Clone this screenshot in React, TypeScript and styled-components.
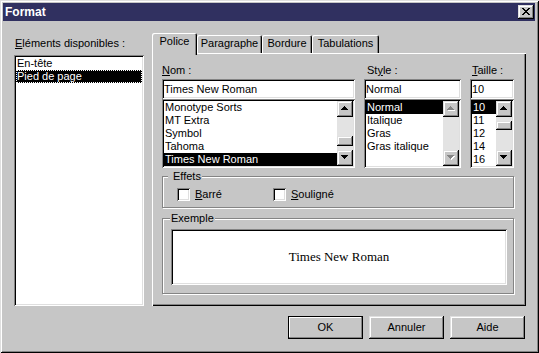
import styled, { createGlobalStyle, css } from 'styled-components';

const face = '#c6c6c6';
const shadow = '#848484';
const light = '#dfdfdf';

const GlobalStyle = createGlobalStyle`
  html, body {
    margin: 0;
    padding: 0;
    background: ${face};
  }
  body {
    font-family: 'Liberation Sans', Arial, sans-serif;
    font-size: 11px;
    color: #000;
  }
`;

const raised = css`
  background: ${face};
  box-shadow: inset -1px -1px 0 #000, inset 1px 1px 0 ${light},
    inset -2px -2px 0 ${shadow}, inset 2px 2px 0 #fff;
`;

const sunken = css`
  box-shadow: inset 1px 1px 0 ${shadow}, inset -1px -1px 0 #fff,
    inset 2px 2px 0 #000, inset -2px -2px 0 ${light};
`;

const Window = styled.div`
  width: 539px;
  height: 353px;
  box-sizing: border-box;
  padding: 3px 4px 4px 3px;
  background: ${face};
  box-shadow: inset 1px 1px 0 ${light}, inset -1px -1px 0 #000,
    inset 2px 2px 0 #fff, inset -2px -2px 0 ${shadow};
  display: flex;
  flex-direction: column;
`;

const TitleBar = styled.div`
  height: 18px;
  background: #303060;
  display: flex;
  align-items: center;
  justify-content: space-between;
  padding: 0 1px 0 2px;
`;

const Title = styled.span`
  color: #fff;
  font-weight: bold;
  font-size: 12px;
  line-height: 18px;
`;

const CloseButton = styled.div`
  width: 16px;
  height: 14px;
  box-sizing: border-box;
  ${raised};
  display: flex;
  align-items: center;
  justify-content: center;
  padding: 0 1px 1px 0;
`;

const Main = styled.div`
  display: flex;
  padding-left: 11px;
`;

const LeftColumn = styled.div`
  width: 130px;
  padding-top: 16px;
  display: flex;
  flex-direction: column;
`;

const RightColumn = styled.div`
  width: 374px;
  margin-left: 8px;
  padding-top: 12px;
  display: flex;
  flex-direction: column;
`;

const Label = styled.div<{ $indent?: number }>`
  line-height: 13px;
  height: 13px;
  padding-left: ${(p) => p.$indent ?? 0}px;
  white-space: nowrap;
`;

const TabStrip = styled.div`
  height: 20px;
  display: flex;
  align-items: flex-end;
`;

const Tab = styled.div<{ $active?: boolean; $w: number }>`
  width: ${(p) => p.$w}px;
  height: ${(p) => (p.$active ? 22 : 18)}px;
  margin-bottom: ${(p) => (p.$active ? -2 : 0)}px;
  box-sizing: border-box;
  padding-top: 2px;
  line-height: 13px;
  text-align: center;
  background: ${face};
  border-radius: 2px 2px 0 0;
  box-shadow: inset 1px 1px 0 #fff, inset -1px 0 0 #000, inset -2px 0 0 ${shadow};
  position: relative;
  z-index: ${(p) => (p.$active ? 1 : 0)};
`;

const Panel = styled.div`
  height: 253px;
  box-sizing: border-box;
  padding: 11px 12px 0 10px;
  background: ${face};
  box-shadow: inset 1px 1px 0 #fff, inset -1px -1px 0 #000, inset -2px -2px 0 ${shadow};
  display: flex;
  flex-direction: column;
`;

const FieldRow = styled.div`
  display: grid;
  grid-template-columns: 193px 97px 44px;
  column-gap: 9px;
`;

const Field = styled.div`
  display: flex;
  flex-direction: column;
`;

const TextBox = styled.div`
  margin-top: 2px;
  height: 20px;
  box-sizing: border-box;
  padding: 2px;
  line-height: 16px;
  background: #fff;
  white-space: nowrap;
  overflow: hidden;
  ${sunken};
`;

const ListBox = styled.div<{ $h: number; $mt?: number }>`
  height: ${(p) => p.$h}px;
  margin-top: ${(p) => p.$mt ?? 0}px;
  box-sizing: border-box;
  padding: 2px;
  background: #fff;
  ${sunken};
  display: flex;
`;

const Rows = styled.div`
  flex: 1;
  min-width: 0;
  overflow: hidden;
`;

const Row = styled.div<{ $sel?: boolean; $focus?: boolean }>`
  height: 13px;
  line-height: 13px;
  padding-left: 1px;
  white-space: nowrap;
  background: ${(p) => (p.$sel ? '#000' : 'transparent')};
  color: ${(p) => (p.$sel ? '#fff' : '#000')};
  outline: ${(p) => (p.$focus ? '1px dotted #fff' : 'none')};
  outline-offset: -1px;
`;

const ScrollBar = styled.div`
  width: 16px;
  background: #e3e3e3;
  display: flex;
  flex-direction: column;
`;

const ScrollButton = styled.div`
  height: 16px;
  ${raised};
  display: flex;
  align-items: center;
  justify-content: center;
  padding-bottom: 1px;
  box-sizing: border-box;
`;

const Track = styled.div<{ $top: number }>`
  flex: 1;
  padding-top: ${(p) => p.$top}px;
`;

const Thumb = styled.div<{ $h: number }>`
  height: ${(p) => p.$h}px;
  ${raised};
`;

const Group = styled.fieldset<{ $mt: number; $pb: number }>`
  margin: ${(p) => p.$mt}px 0 0;
  padding: 0 0 ${(p) => p.$pb}px;
  min-width: 0;
  border: 1px solid ${shadow};
  box-shadow: inset 1px 1px 0 #fff, 1px 1px 0 #fff;
`;

const Legend = styled.legend<{ $indent: number; $pad: number }>`
  margin-left: ${(p) => p.$indent}px;
  padding: 0 1px 0 ${(p) => p.$pad}px;
  line-height: 13px;
  background: ${face};
`;

const CheckRow = styled.div`
  display: flex;
  margin: 5px 0 0 14px;
`;

const CheckItem = styled.div<{ $w?: number }>`
  width: ${(p) => (p.$w ? `${p.$w}px` : 'auto')};
  display: flex;
  align-items: center;
  gap: 5px;
  line-height: 13px;
`;

const CheckBox = styled.div`
  width: 13px;
  height: 13px;
  background: #fff;
  ${sunken};
`;

const Preview = styled.div`
  margin: 4px 6px 0 8px;
  height: 56px;
  background: #fff;
  ${sunken};
  display: flex;
  align-items: center;
  justify-content: center;
  font-family: 'Liberation Serif', 'Times New Roman', serif;
  font-size: 13px;
`;

const ButtonRow = styled.div`
  margin-top: 10px;
  display: flex;
  justify-content: flex-end;
  gap: 6px;
  padding-right: 1px;
`;

const Button = styled.div<{ $default?: boolean }>`
  width: 75px;
  height: 23px;
  line-height: 23px;
  text-align: center;
  background: ${face};
  box-shadow: ${(p) =>
    p.$default
      ? `inset 0 0 0 1px #000, inset -2px -2px 0 ${shadow}, inset 2px 2px 0 #fff`
      : `inset -1px -1px 0 #000, inset 1px 1px 0 ${light}, inset -2px -2px 0 ${shadow}, inset 2px 2px 0 #fff`};
`;

const CloseIcon = () => (
  <svg width="8" height="7" viewBox="0 0 8 7" shapeRendering="crispEdges">
    <path d="M0 0h2v1h-2z M6 0h2v1h-2z M1 1h2v1h-2z M5 1h2v1h-2z M2 2h4v1h-4z M3 3h2v1h-2z M2 4h4v1h-4z M1 5h2v1h-2z M5 5h2v1h-2z M0 6h2v1h-2z M6 6h2v1h-2z" fill="#000" />
  </svg>
);

const upPath = 'M3 0h1v1h-1z M2 1h3v1h-3z M1 2h5v1h-5z M0 3h7v1h-7z';
const downPath = 'M0 0h7v1h-7z M1 1h5v1h-5z M2 2h3v1h-3z M3 3h1v1h-1z';

const Arrow = ({ dir, disabled }: { dir: 'up' | 'down'; disabled?: boolean }) => (
  <svg width="8" height="5" viewBox="0 0 8 5" shapeRendering="crispEdges">
    {disabled && <path d={dir === 'up' ? upPath : downPath} fill="#fff" transform="translate(1 1)" />}
    <path d={dir === 'up' ? upPath : downPath} fill={disabled ? shadow : '#000'} />
  </svg>
);

type Scroll = { top?: number; thumb?: number; disabled?: boolean };

const List = ({
  items,
  selected,
  height,
  focus,
  scroll,
  mt,
}: {
  items: string[];
  selected: number;
  height: number;
  focus?: boolean;
  scroll?: Scroll;
  mt?: number;
}) => (
  <ListBox $h={height} $mt={mt}>
    <Rows>
      {items.map((item, i) => (
        <Row key={item} $sel={i === selected} $focus={focus && i === selected}>
          {item}
        </Row>
      ))}
    </Rows>
    {scroll && (
      <ScrollBar>
        <ScrollButton>
          <Arrow dir="up" disabled={scroll.disabled} />
        </ScrollButton>
        <Track $top={scroll.top ?? 0}>{scroll.thumb ? <Thumb $h={scroll.thumb} /> : null}</Track>
        <ScrollButton>
          <Arrow dir="down" disabled={scroll.disabled} />
        </ScrollButton>
      </ScrollBar>
    )}
  </ListBox>
);

const App = () => {
  return (
    <>
      <GlobalStyle />
      <Window>
        <TitleBar>
          <Title>Format</Title>
          <CloseButton>
            <CloseIcon />
          </CloseButton>
        </TitleBar>
        <Main>
          <LeftColumn>
            <Label $indent={1}>
              <u>E</u>léments disponibles :
            </Label>
            <List items={['En-tête', 'Pied de page']} selected={1} focus height={251} mt={5} />
          </LeftColumn>
          <RightColumn>
            <TabStrip>
              <Tab $active $w={45}>Police</Tab>
              <Tab $w={65}>Paragraphe</Tab>
              <Tab $w={50}>Bordure</Tab>
              <Tab $w={67}>Tabulations</Tab>
            </TabStrip>
            <Panel>
              <FieldRow>
                <Field>
                  <Label>
                    <u>N</u>om :
                  </Label>
                  <TextBox>Times New Roman</TextBox>
                  <List
                    items={['Monotype Sorts', 'MT Extra', 'Symbol', 'Tahoma', 'Times New Roman']}
                    selected={4}
                    height={69}
                    scroll={{ top: 19, thumb: 10 }}
                  />
                </Field>
                <Field>
                  <Label $indent={3}>
                    St<u>y</u>le :
                  </Label>
                  <TextBox>Normal</TextBox>
                  <List
                    items={['Normal', 'Italique', 'Gras', 'Gras italique']}
                    selected={0}
                    height={69}
                    scroll={{ disabled: true }}
                  />
                </Field>
                <Field>
                  <Label $indent={2}>
                    <u>T</u>aille :
                  </Label>
                  <TextBox>10</TextBox>
                  <List
                    items={['10', '11', '12', '14', '16']}
                    selected={0}
                    height={69}
                    scroll={{ top: 4, thumb: 9 }}
                  />
                </Field>
              </FieldRow>
              <Group $mt={2} $pb={6}>
                <Legend $indent={5} $pad={5}>Effets</Legend>
                <CheckRow>
                  <CheckItem $w={96}>
                    <CheckBox />
                    <span>
                      <u>B</u>arré
                    </span>
                  </CheckItem>
                  <CheckItem>
                    <CheckBox />
                    <span>
                      <u>S</u>ouligné
                    </span>
                  </CheckItem>
                </CheckRow>
              </Group>
              <Group $mt={4} $pb={8}>
                <Legend $indent={7} $pad={1}>Exemple</Legend>
                <Preview>Times New Roman</Preview>
              </Group>
            </Panel>
            <ButtonRow>
              <Button $default>OK</Button>
              <Button>Annuler</Button>
              <Button>Aide</Button>
            </ButtonRow>
          </RightColumn>
        </Main>
      </Window>
    </>
  );
};

export default App;
